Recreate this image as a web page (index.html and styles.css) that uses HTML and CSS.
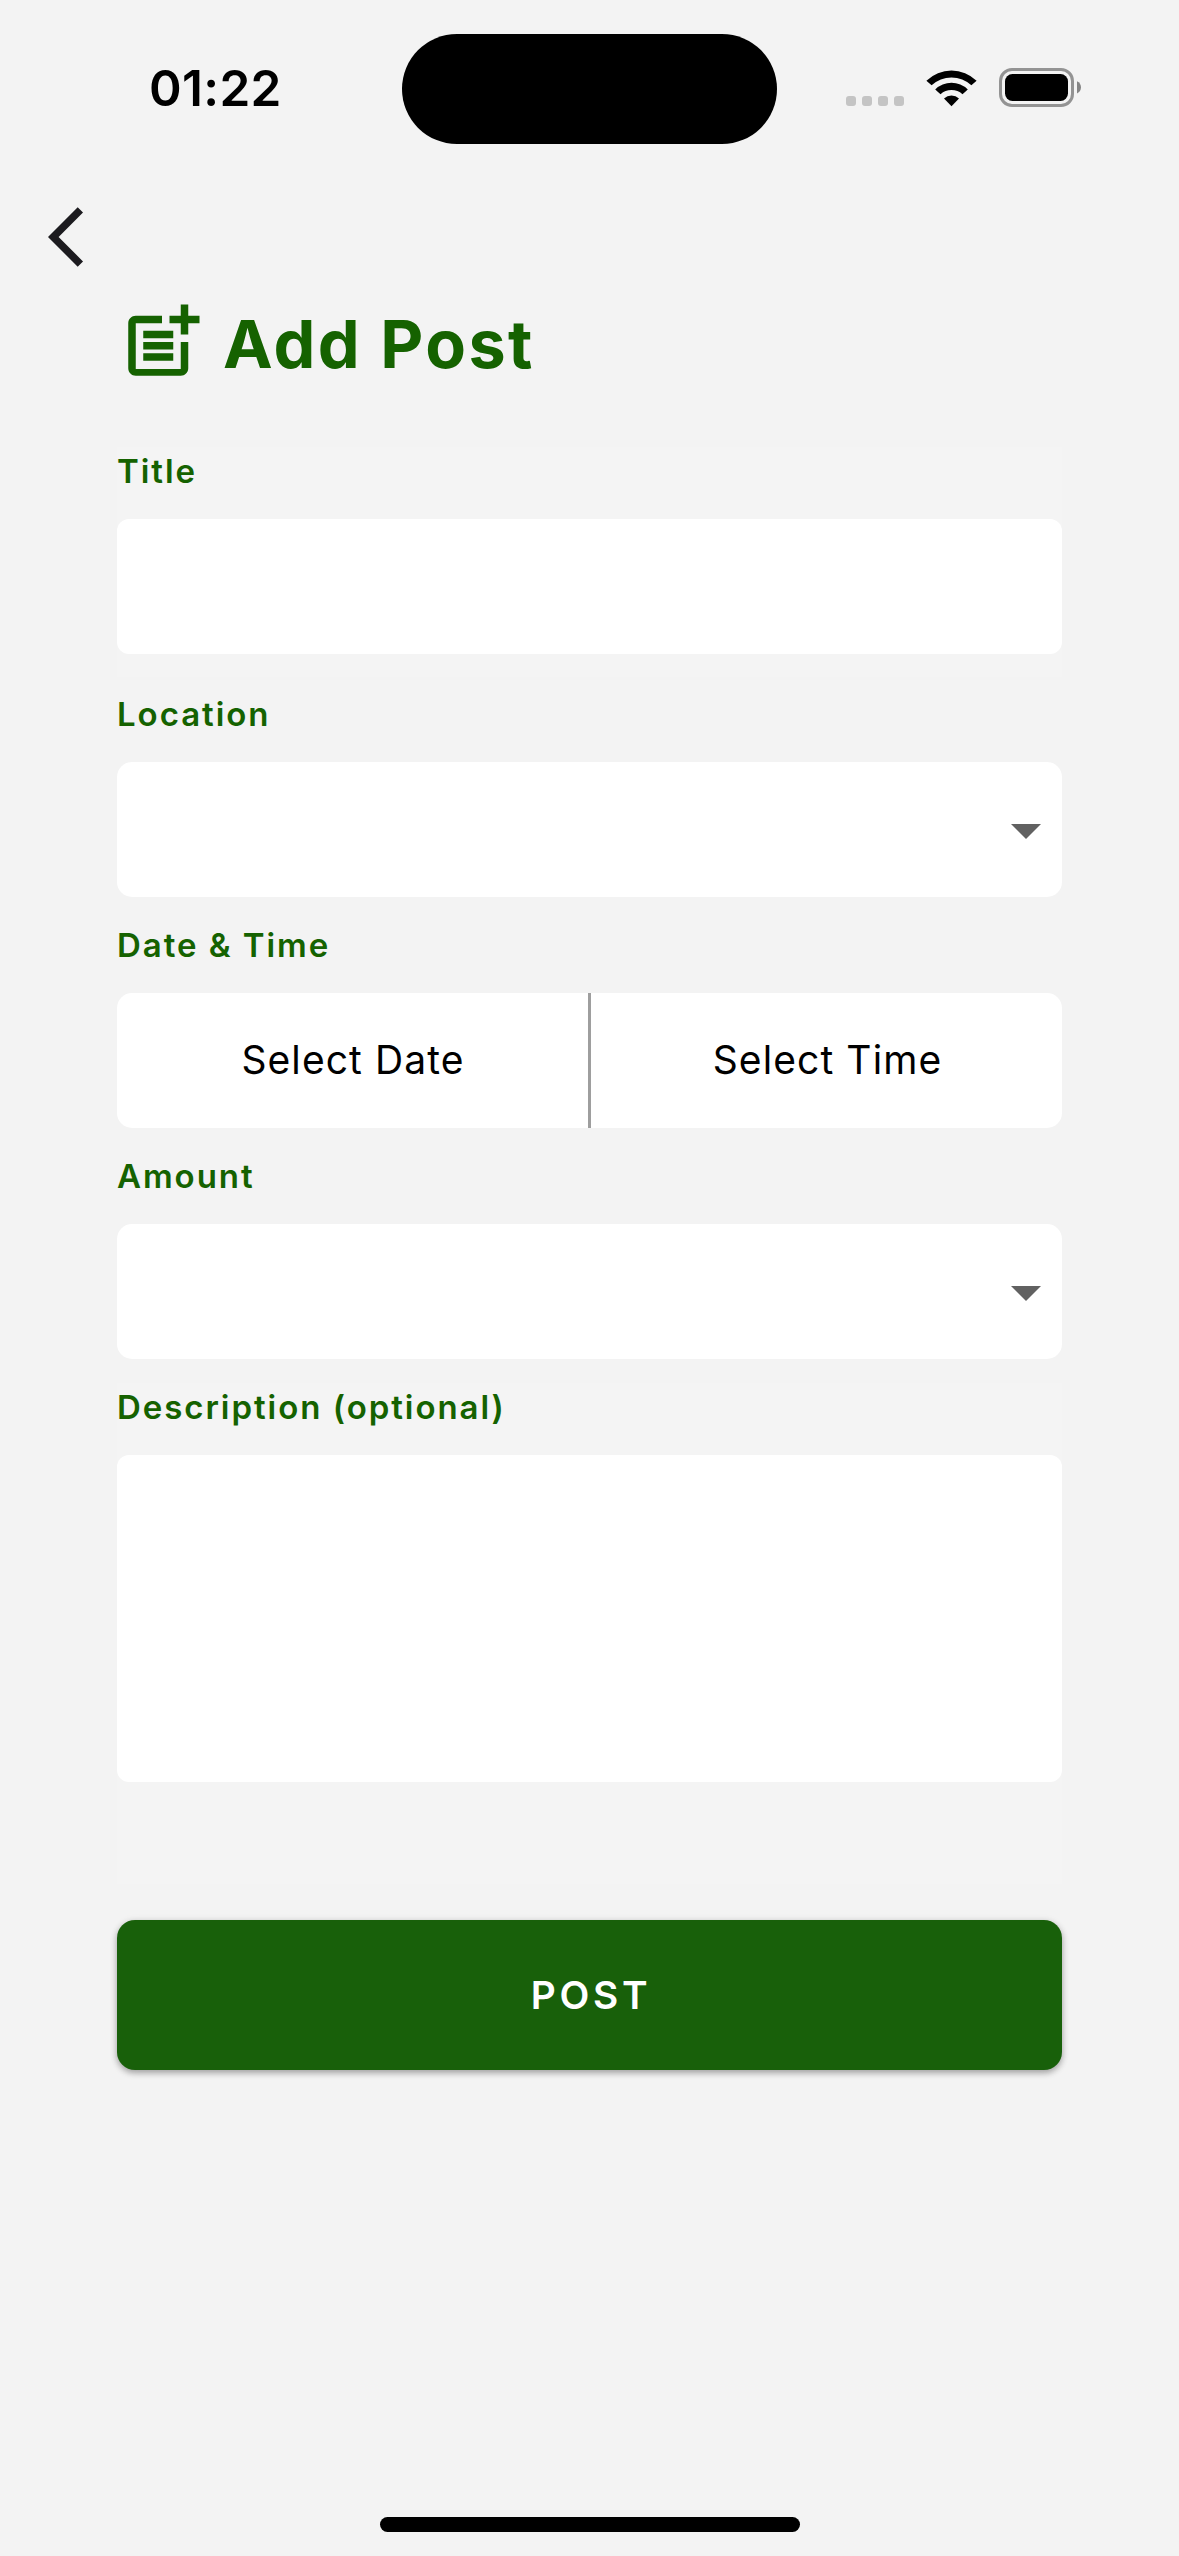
FILE: index.html
```
<!DOCTYPE html>
<html lang="en">
<head>
<meta charset="utf-8">
<title>Add Post</title>
<link rel="stylesheet" href="styles.css">
</head>
<body>
<div class="screen">
  <header class="status">
    <span class="time">01:22</span>
    <div class="island"></div>
    <div class="indicators">
      <svg class="dots" width="58" height="10" viewBox="0 0 58 10">
        <rect width="10" height="10" rx="3"/><rect x="16" width="10" height="10" rx="3"/><rect x="32" width="10" height="10" rx="3"/><rect x="48" width="10" height="10" rx="3"/>
      </svg>
      <svg class="wifi" width="51" height="38" viewBox="0 0 51 38">
        <path d="M0.4 11.7a36 36 0 0 1 50.2 0l-5.2 4.6a29 29 0 0 0-39.8 0z"/>
        <path d="M9.2 20.4a23.5 23.5 0 0 1 32.6 0l-5.3 4.9a16.5 16.5 0 0 0-22 0z"/>
        <path d="M18 29.4a11.5 11.5 0 0 1 15 0l-7.5 7.9z"/>
      </svg>
      <svg class="battery" width="82" height="39" viewBox="0 0 82 39">
        <rect x="1.5" y="1.5" width="72" height="36" rx="11.5" fill="none" stroke="#939393" stroke-width="3"/>
        <rect x="6" y="6" width="63" height="27" rx="7.5"/>
        <path d="M78 13.2c5.3 2 5.3 10.2 0 12.2z" fill="#858585"/>
      </svg>
    </div>
  </header>

  <nav class="nav">
    <svg width="72" height="72" viewBox="0 0 24 24"><path d="M11.67 3.87 9.9 2.1 0 12l9.9 9.9 1.77-1.77L3.54 12z"/></svg>
  </nav>

  <main class="content">
    <div class="heading">
      <svg width="90" height="90" viewBox="0 0 24 24"><path d="M17 19.22H5V7h7V5H5c-1.1 0-2 .9-2 2v12c0 1.1.9 2 2 2h12c1.1 0 2-.9 2-2v-7h-2v7.22z"/><path d="M19 2h-2v3h-3v2h3v3h2V7h3V5h-3V2zM7 9h8v2H7zM7 12h8v2H7zM7 15h8v2H7z"/></svg>
      <h1>Add Post</h1>
    </div>

    <section class="group tinted title-group">
      <div class="label">Title</div>
      <div class="field text"></div>
    </section>

    <section class="group">
      <div class="label">Location</div>
      <div class="field select"><svg width="30" height="15" viewBox="0 0 30 15"><path d="M0 0h30L15 15z"/></svg></div>
    </section>

    <section class="group">
      <div class="label">Date &amp; Time</div>
      <div class="field split">
        <div class="pick pick-date">Select Date</div>
        <div class="pick pick-time">Select Time</div>
      </div>
    </section>

    <section class="group">
      <div class="label">Amount</div>
      <div class="field select"><svg width="30" height="15" viewBox="0 0 30 15"><path d="M0 0h30L15 15z"/></svg></div>
    </section>

    <section class="group tinted description-group">
      <div class="label">Description (optional)</div>
      <div class="field text area"></div>
    </section>

    <button class="post" type="button">POST</button>
  </main>

  <div class="home"></div>
</div>
</body>
</html>
```
FILE: styles.css
```
* { box-sizing: border-box; }
body { margin: 0; background: #f3f3f3; font-family: "Inter", "Liberation Sans", sans-serif; }
svg { display: block; flex: none; }

.screen { width: 1179px; height: 2556px; display: flex; flex-direction: column; overflow: hidden; }

/* Status bar */
.status { height: 177px; flex: none; display: flex; align-items: flex-start; padding-top: 33px; }
.time { width: 253px; margin-left: 149px; font-size: 49.5px; font-weight: 600; line-height: 110px; letter-spacing: .35px; color: #000; }
.island { width: 375px; height: 110px; margin-top: 1px; border-radius: 55px; background: #000; }
.indicators { display: flex; align-items: flex-start; padding: 35px 0 0 69px; }
.dots { margin-top: 28px; fill: #c4c4c4; }
.wifi { margin: 0 22px; margin-top: 1px; }

/* Back button */
.nav { height: 120px; flex: none; padding: 24px 0 0 48px; fill: #1c1b1f; }

.content { padding: 0 117px; }
.heading { display: flex; align-items: flex-start; gap: 16px; height: 150px; fill: #156200; }
h1 { margin: 0; font-size: 66.5px; font-weight: 700; line-height: 94px; letter-spacing: 2.4px; color: #156200; }

/* Form */
.group { margin-bottom: 24px; }
.tinted { background: #f4f4f4; }
.title-group { padding-bottom: 23px; margin-bottom: 13px; }
.description-group { padding-bottom: 102px; margin-bottom: 36px; }
.label { height: 72px; padding: 4px 0 0; font-size: 33px; font-weight: 600; line-height: 41px; letter-spacing: 1.95px; white-space: nowrap; color: #156200; }
.field { height: 135px; border-radius: 15px; background: #fff; }
.text { border-radius: 12px; }
.area { height: 327px; }
.select { display: flex; align-items: flex-start; justify-content: flex-end; padding: 62px 21px 0; fill: #616161; }
.split { display: flex; overflow: hidden; }
.pick { flex: 1; text-align: center; font-size: 39px; line-height: 134px; letter-spacing: 1.1px; color: #000; }
.pick-date { flex: none; width: 474px; border-right: 3px solid #9e9e9e; padding-left: 1px; }
.pick-time { padding-left: 2px; }

.post { display: block; width: 100%; height: 150px; border: 0; border-radius: 18px; padding: 0 0 0 3px; background: #18600a; color: #fff; font: 600 38.8px/150px "Inter", "Liberation Sans", sans-serif; letter-spacing: 3.71px; text-align: center; box-shadow: 0 3px 6px rgba(0, 0, 0, .3), 0 1px 9px rgba(0, 0, 0, .08); }

.home { width: 420px; height: 15px; flex: none; margin: auto auto 24px 380px; border-radius: 8px; background: #000; }
```
